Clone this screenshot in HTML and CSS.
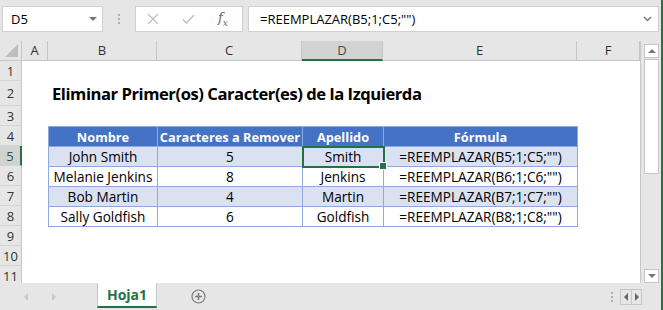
FILE: index.html
```html
<!DOCTYPE html>
<html lang="es">
<head>
  <meta charset="UTF-8" />
  <title>Eliminar Primer(os) Caracter(es) de la Izquierda</title>
  <link rel="stylesheet" href="styles.css">
</head>
<body>
  <div class="formula-bar">
    <div class="name-box">
      <span>D5</span>
      <span class="caret"></span>
    </div>
    <div class="grip"><i></i><i></i><i></i></div>
    <div class="fx-box">
      <svg width="12" height="12" viewBox="0 0 12 12"><path d="M1 1L11 11M11 1L1 11" stroke="#c3c3c3" stroke-width="1.4" fill="none"/></svg>
      <svg width="13" height="12" viewBox="0 0 13 12"><path d="M1 6.5L4.5 10L12 2" stroke="#c3c3c3" stroke-width="1.6" fill="none"/></svg>
      <span class="fx">f<sub>x</sub></span>
    </div>
    <div class="input">
      <span>=REEMPLAZAR(B5;1;C5;"")</span>
      <svg width="9" height="6" viewBox="0 0 9 6"><path d="M1 1L4.5 4.5L8 1" stroke="#777" stroke-width="1.5" fill="none"/></svg>
    </div>
  </div>

  <div class="sheet">
    <div class="grid">
      <div class="corner"><span></span></div>
      <div class="col-h">A</div>
      <div class="col-h">B</div>
      <div class="col-h">C</div>
      <div class="col-h active">D</div>
      <div class="col-h">E</div>
      <div class="col-h">F</div>

      <div class="row-h">1</div>
      <div class="row-h">2</div>
      <div class="row-h">3</div>
      <div class="row-h">4</div>
      <div class="row-h active">5</div>
      <div class="row-h">6</div>
      <div class="row-h">7</div>
      <div class="row-h">8</div>
      <div class="row-h">9</div>
      <div class="row-h">10</div>
      <div class="row-h">11</div>

      <h1 class="title">Eliminar Primer(os) Caracter(es) de la Izquierda</h1>

      <table class="data">
        <colgroup>
          <col style="width:109px">
          <col style="width:145px">
          <col style="width:81px">
          <col style="width:194px">
        </colgroup>
        <tr><th>Nombre</th><th>Caracteres a Remover</th><th>Apellido</th><th>Fórmula</th></tr>
        <tr class="band"><td>John Smith</td><td>5</td><td class="selected">Smith</td><td>=REEMPLAZAR(B5;1;C5;"")</td></tr>
        <tr><td>Melanie Jenkins</td><td>8</td><td>Jenkins</td><td>=REEMPLAZAR(B6;1;C6;"")</td></tr>
        <tr class="band"><td>Bob Martin</td><td>4</td><td>Martin</td><td>=REEMPLAZAR(B7;1;C7;"")</td></tr>
        <tr><td>Sally Goldfish</td><td>6</td><td>Goldfish</td><td>=REEMPLAZAR(B8;1;C8;"")</td></tr>
      </table>
    </div>

    <div class="vscroll">
      <div class="sb-btn"><span class="tri up"></span></div>
      <div class="sb-thumb"></div>
      <div class="sb-track"></div>
      <div class="sb-btn"><span class="tri down"></span></div>
    </div>
  </div>

  <div class="tabs">
    <div class="tab-nav">
      <span class="tri left light"></span>
      <span class="tri right light"></span>
    </div>
    <div class="tab">Hoja1</div>
    <div class="add-sheet">
      <svg width="15" height="15" viewBox="0 0 15 15"><circle cx="7.5" cy="7.5" r="6.5" stroke="#7a7a7a" stroke-width="1.2" fill="none"/><path d="M7.5 4V11M4 7.5H11" stroke="#7a7a7a" stroke-width="1.6"/></svg>
    </div>
    <div class="hscroll">
      <div class="grip"><i></i><i></i><i></i></div>
      <div class="hs-box">
        <span><i class="tri left"></i></span>
        <span><i class="tri right"></i></span>
      </div>
    </div>
  </div>
</body>
</html>
```

FILE: styles.css
```css
* {
  box-sizing: border-box;
  margin: 0;
  padding: 0;
}

body {
  width: 663px;
  height: 310px;
  overflow: hidden;
  background: #e6e6e6;
  border-right: 2px solid #217346;
  font-family: 'Open Sans', sans-serif;
  font-size: 13px;
  color: #000;
  display: flex;
  flex-direction: column;
}

/* formula bar */

.formula-bar {
  height: 41px;
  display: flex;
  align-items: flex-start;
  gap: 5px;
  padding: 6px 2px 0 2px;
}

.name-box,
.fx-box,
.input {
  height: 26px;
  background: #fff;
  border: 1px solid #d0d0d0;
  display: flex;
  align-items: center;
}

.name-box {
  width: 101px;
  justify-content: space-between;
  padding: 0 5px 0 8px;
}

.caret {
  width: 0;
  height: 0;
  border-left: 4px solid transparent;
  border-right: 4px solid transparent;
  border-top: 4px solid #777;
}

.grip {
  width: 22px;
  height: 26px;
  display: flex;
  flex-direction: column;
  align-items: center;
  justify-content: center;
  gap: 2px;
}

.grip i {
  width: 2px;
  height: 2px;
  background: #b0b0b0;
}

.fx-box {
  width: 108px;
  gap: 23px;
  padding-left: 11px;
}

.fx {
  font-family: 'DejaVu Serif', serif;
  font-style: italic;
  font-size: 13px;
  color: #666;
}

.fx sub {
  font-size: 9px;
}

.input {
  flex: 1;
  justify-content: space-between;
  padding: 0 6px 0 11px;
}

/* sheet */

.sheet {
  height: 242px;
  display: flex;
}

.grid {
  display: grid;
  grid-template-columns: 22px 26px 109px 145px 81px 194px 63px;
  grid-template-rows: 20px 20px 25px 20px 20px 20px 20px 20px 20px 20px 20px 20px;
  background: #fff;
  border-right: 1px solid #c6c6c6;
  overflow: hidden;
}

.corner {
  background: #e6e6e6;
  border-right: 1px solid #c6c6c6;
  border-bottom: 1px solid #c6c6c6;
  position: relative;
}

.corner span {
  position: absolute;
  right: 3px;
  bottom: 3px;
  width: 0;
  height: 0;
  border-left: 13px solid transparent;
  border-bottom: 13px solid #bdbdbd;
}

.col-h {
  background: #e6e6e6;
  border-right: 1px solid #c6c6c6;
  border-bottom: 1px solid #c6c6c6;
  text-align: center;
  line-height: 19px;
  color: #333;
}

.col-h:last-of-type {
  border-right: none;
}

.col-h.active {
  background: #d2d2d2;
  border-bottom: 2px solid #217346;
  color: #1d5f3a;
}

.row-h {
  grid-column: 1;
  background: #e6e6e6;
  border-right: 1px solid #c6c6c6;
  border-bottom: 1px solid #d4d4d4;
  display: flex;
  align-items: center;
  justify-content: center;
  color: #333;
}

.row-h.active {
  background: #d2d2d2;
  border-right: 2px solid #217346;
  color: #1d5f3a;
}

.title {
  grid-column: 3 / 8;
  grid-row: 3;
  align-self: end;
  padding: 0 0 1px 4px;
  font-size: 16.6px;
  font-weight: 700;
  letter-spacing: -0.45px;
  line-height: 22px;
  white-space: nowrap;
}

.data {
  grid-column: 3 / 7;
  grid-row: 5 / 10;
  border-collapse: collapse;
  table-layout: fixed;
  width: 529px;
}

.data th,
.data td {
  height: 20px;
  padding: 0;
  border: 1px solid #8ea9db;
  text-align: center;
  white-space: nowrap;
  line-height: 18px;
  font-size: 13.6px;
  font-weight: 400;
}

.data th {
  background: #4472c4;
  color: #fff;
  font-size: 12.8px;
  font-weight: 700;
}

.data .band td {
  background: #d9e1f2;
}

.data td.selected {
  position: relative;
  outline: 2px solid #217346;
  outline-offset: -1px;
}

.data td.selected::after {
  content: '';
  position: absolute;
  right: -4px;
  bottom: -4px;
  width: 6px;
  height: 6px;
  background: #217346;
  border: 1px solid #fff;
}

/* vertical scrollbar */

.vscroll {
  width: 20px;
  display: flex;
  flex-direction: column;
  padding: 3px 2px 0 3px;
}

.sb-btn {
  height: 14px;
  background: #fff;
  border: 1px solid #c6c6c6;
  display: flex;
  align-items: center;
  justify-content: center;
}

.sb-thumb {
  height: 115px;
  margin-top: 1px;
  background: #fff;
  border: 1px solid #c6c6c6;
}

.sb-track {
  flex: 1;
}

.tri {
  display: inline-block;
  width: 0;
  height: 0;
}

.tri.up {
  border-left: 4px solid transparent;
  border-right: 4px solid transparent;
  border-bottom: 4px solid #777;
}

.tri.down {
  border-left: 4px solid transparent;
  border-right: 4px solid transparent;
  border-top: 4px solid #777;
}

.tri.left {
  border-top: 4px solid transparent;
  border-bottom: 4px solid transparent;
  border-right: 4px solid #666;
}

.tri.right {
  border-top: 4px solid transparent;
  border-bottom: 4px solid transparent;
  border-left: 4px solid #666;
}

.tri.light.left {
  border-right-color: #c8c8c8;
}

.tri.light.right {
  border-left-color: #c8c8c8;
}

/* sheet tabs */

.tabs {
  height: 27px;
  display: flex;
}

.tab-nav {
  width: 97px;
  display: flex;
  align-items: center;
  gap: 24px;
  padding-left: 24px;
}

.tab {
  width: 60px;
  background: #fff;
  border-left: 1px solid #c6c6c6;
  border-right: 1px solid #c6c6c6;
  border-bottom: 2px solid #217346;
  margin-bottom: 2px;
  color: #217346;
  font-weight: 700;
  font-size: 14px;
  text-align: center;
  line-height: 23px;
}

.add-sheet {
  width: 83px;
  display: flex;
  align-items: center;
  justify-content: center;
}

.hscroll {
  flex: 1;
  display: flex;
  align-items: center;
  justify-content: flex-end;
  gap: 4px;
  padding-right: 19px;
}

.hscroll .grip {
  height: 15px;
  width: 8px;
}

.hs-box {
  display: flex;
  height: 16px;
  border: 1px solid #c6c6c6;
  background: #e6e6e6;
}

.hs-box span {
  width: 10px;
  display: flex;
  align-items: center;
  justify-content: center;
}

.hs-box span + span {
  border-left: 1px solid #c6c6c6;
}
```
